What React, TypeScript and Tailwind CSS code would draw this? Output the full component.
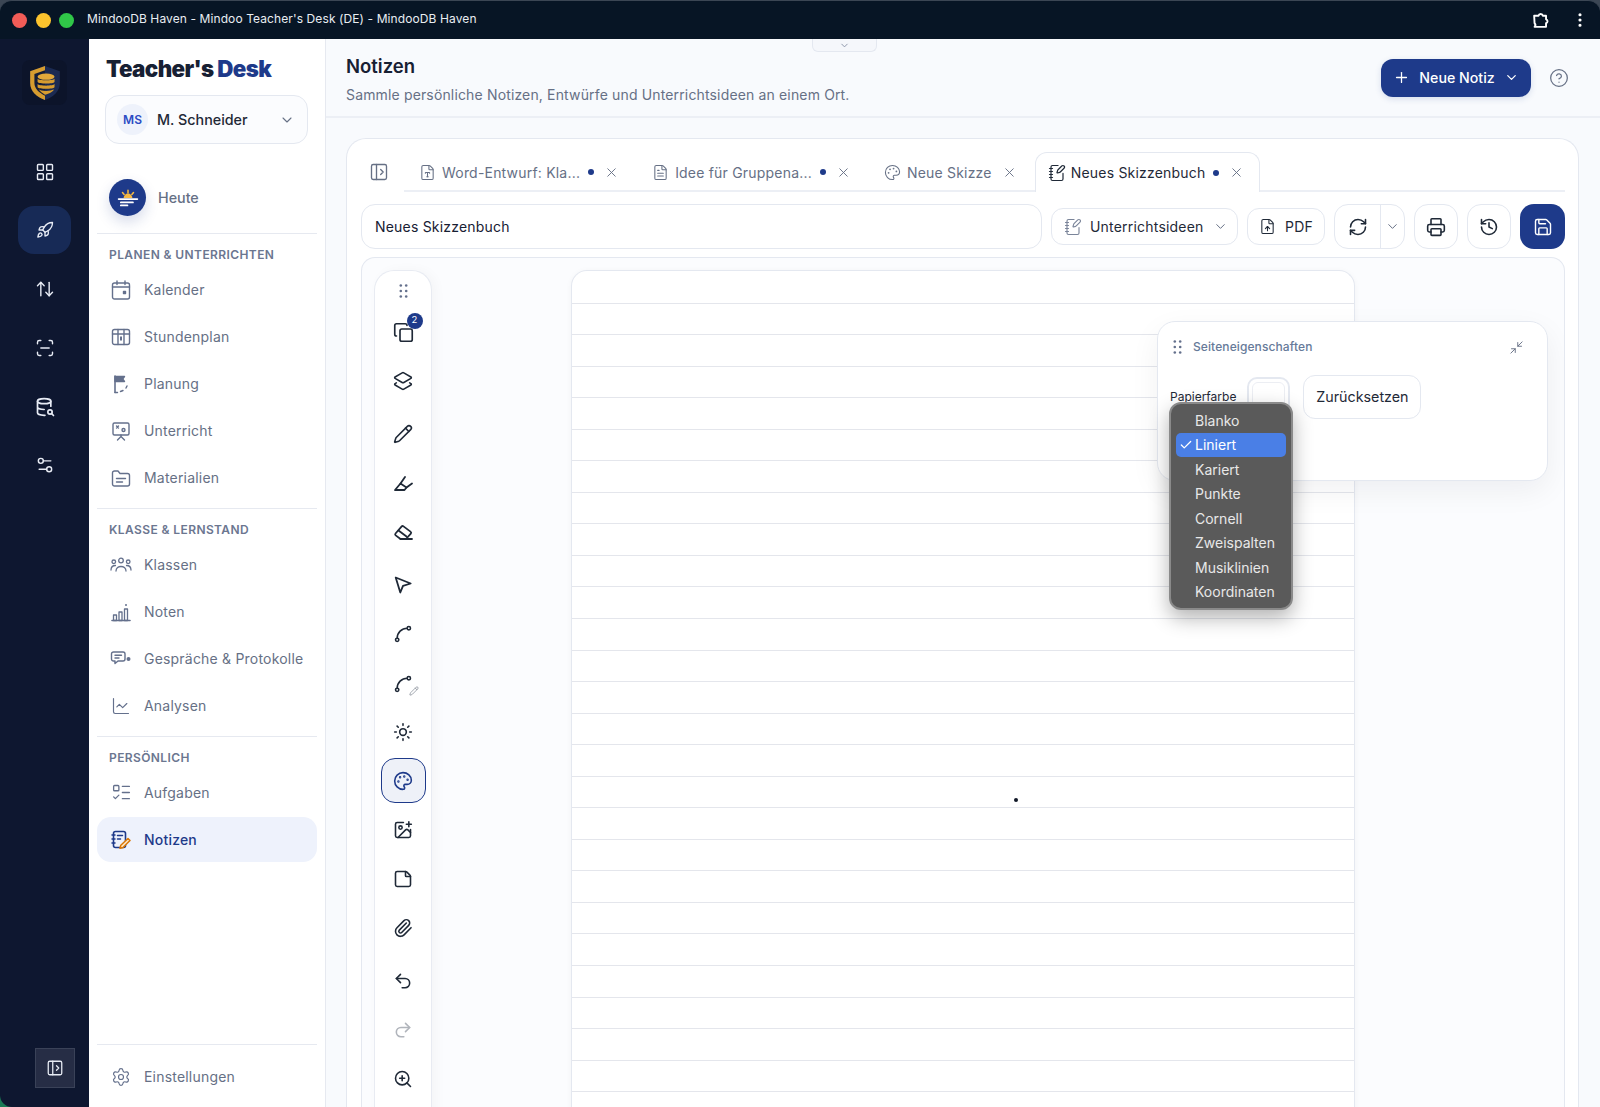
import React from 'react';
import {
  LayoutGrid, Rocket, ArrowUpDown, ScanLine, Settings2, PanelLeftOpen, ChevronDown, Settings, X, FileType, FileText, Palette, NotebookPen,
  FileUp, RefreshCw, Printer, History, Save, Plus, CircleHelp, Layers2, Pencil, Spline, Sun, ImagePlus, StickyNote, Paperclip, Undo2, Redo2, ZoomIn, Copy, Minimize2, EllipsisVertical, Check, ChartLine, ListTodo,
} from 'lucide-react';

const font = "font-['Inter','Liberation_Sans',sans-serif]";

function Grip({ className = '' }: { className?: string }) {
  return (
    <svg width="9" height="14" viewBox="0 0 9 14" className={className} fill="currentColor">
      {[1.5, 7, 12.5].map((y) => (
        <g key={y}>
          <circle cx="1.8" cy={y} r="1.3" />
          <circle cx="7.2" cy={y} r="1.3" />
        </g>
      ))}
    </svg>
  );
}

const S = { fill: 'none', stroke: 'currentColor', strokeWidth: 1.7, strokeLinecap: 'round', strokeLinejoin: 'round' } as const;

const CalendarIcon = () => (
  <svg width="20" height="20" viewBox="0 0 20 20" {...S} strokeWidth={1.4}>
    <rect x="1.5" y="3" width="17" height="16" rx="2" />
    <path d="M1.5 7h17M6 1v3.5M14 1v3.5" />
    <rect x="12.5" y="11.5" width="2" height="2" fill="currentColor" />
  </svg>
);
const TimetableIcon = () => (
  <svg width="20" height="20" viewBox="0 0 20 20" {...S} strokeWidth={1.4}>
    <rect x="1.5" y="2.5" width="17" height="15" rx="2" />
    <path d="M1.5 7h17M7 2.5v15M13 2.5v15" />
    <rect x="9" y="9.5" width="2" height="4" fill="currentColor" stroke="none" />
  </svg>
);
const PlanIcon = () => (
  <svg width="20" height="20" viewBox="0 0 20 20" {...S} strokeWidth={1.4}>
    <path d="M4 2v16.5" strokeWidth={1.6} />
    <path d="M4 2.5h9.5l-1.8 2.5 1.8 2.5h-9.5z" fill="currentColor" />
    <path d="M4 18.5h2.5M9.5 17.5l2.5-1M15 14l1-2" />
  </svg>
);
const TeachIcon = () => (
  <svg width="20" height="20" viewBox="0 0 20 20" {...S} strokeWidth={1.4}>
    <rect x="2" y="2" width="16" height="12" rx="1.5" />
    <path d="M5.5 5l2 2m0-2l-2 2" />
    <circle cx="12.5" cy="9" r="1.5" />
    <path d="M10 14v1.5M6.5 19l3.5-3.5 3.5 3.5" />
  </svg>
);
const FolderIcon = () => (
  <svg width="20" height="20" viewBox="0 0 20 20" {...S} strokeWidth={1.4}>
    <path d="M1.5 5a2 2 0 0 1 2-2h3.5l2 2.5h7.5a2 2 0 0 1 2 2V16a2 2 0 0 1-2 2h-13a2 2 0 0 1-2-2z" />
    <path d="M5.5 10.5h9M5.5 14h6" />
  </svg>
);
const GroupIcon = () => (
  <svg width="22" height="20" viewBox="0 0 22 20" {...S} strokeWidth={1.3}>
    <circle cx="11" cy="5.5" r="2.3" />
    <circle cx="3.8" cy="6.8" r="1.8" />
    <circle cx="18.2" cy="6.8" r="1.8" />
    <path d="M6 16c0-6 10-6 10 0M1 15c0-3 2-4.5 4.5-4.5M21 15c0-3-2-4.5-4.5-4.5" />
  </svg>
);
const BarsIcon = () => (
  <svg width="20" height="20" viewBox="0 0 20 20" {...S} strokeWidth={1.3}>
    <path d="M1 18.5h18" strokeWidth={1.6} />
    <rect x="2.5" y="13" width="3" height="5.5" />
    <rect x="8" y="10" width="3" height="8.5" />
    <rect x="13.5" y="7" width="3" height="11.5" />
    <circle cx="15" cy="3" r="1" fill="currentColor" stroke="none" />
  </svg>
);
const TalkIcon = () => (
  <svg width="22" height="20" viewBox="0 0 22 20" {...S} strokeWidth={1.4}>
    <path d="M3.5 3h9.5a2 2 0 0 1 2 2v5a2 2 0 0 1-2 2H8l-3 2.5V12H3.5a2 2 0 0 1-2-2V5a2 2 0 0 1 2-2z" />
    <path d="M5 6.3h6.5M5 9h4" />
    <circle cx="18.5" cy="10" r="2" fill="currentColor" stroke="none" />
  </svg>
);
const NotesIcon = () => (
  <svg width="20" height="20" viewBox="0 0 20 20" fill="none" strokeLinecap="round" strokeLinejoin="round">
    <rect x="2.5" y="1.5" width="12" height="16" rx="2" stroke="#1e3a8a" strokeWidth="1.6" />
    <path d="M1 5h3M1 9h3M1 13h3M6.5 5.5h5M6.5 9h3" stroke="#1e3a8a" strokeWidth="1.5" />
    <path d="M17 8.5l2 2-7 7-3 .8.8-3z" fill="#fde6c4" stroke="#d97706" strokeWidth="1.5" />
  </svg>
);
const DbSearch = () => (
  <svg width="20" height="20" viewBox="0 0 24 24" {...S} strokeWidth={2}>
    <ellipse cx="11" cy="5" rx="8" ry="3" />
    <path d="M3 5v14c0 1.6 3.5 3 8 3h1M3 12c0 1.6 3.5 3 8 3M19 5v6" />
    <circle cx="18" cy="18" r="2.6" />
    <path d="M20 20l2.2 2.2" />
  </svg>
);
const HighlightIcon = () => (
  <svg width="20" height="20" viewBox="0 0 20 20" {...S} strokeWidth={1.8}>
    <path d="M2 16h9.5L13.5 13.5 7.5 9.5z" />
    <path d="M7.5 9.5L12 3M13.5 13.5l5.5-4" />
  </svg>
);
const EraserIcon = () => (
  <svg width="20" height="20" viewBox="0 0 20 20" {...S} strokeWidth={1.8}>
    <path d="M2.5 10.5L8.5 3.6a1.5 1.5 0 0 1 2-.2l7 5.2a1.5 1.5 0 0 1 .3 2.1L13 16H7.5l-4.8-3.6a1.4 1.4 0 0 1-.2-1.9z" />
    <path d="M7.5 16H19M5.5 7.5l8 6" />
  </svg>
);
const PointerIcon = () => (
  <svg width="20" height="20" viewBox="0 0 20 20" {...S} strokeWidth={1.8}>
    <path d="M2.7 2.5l15 6-7.7 2.4-2.7 6.6z" />
  </svg>
);
const PuzzleIcon = () => (
  <svg width="19" height="19" viewBox="0 0 24 24" {...S} strokeWidth={2.4}>
    <path d="M4 6h5.5a2.8 2.8 0 0 1 5.500 0H19v4.500a2.600 2.600 0 0 1 0 5V20H4.500c1.500-1.500 1.500-3 0-4.500z" />
  </svg>
);
const SplinePen = () => (
  <span className="relative flex h-6 w-6 items-center justify-center">
    <Spline size={20} strokeWidth={1.9} />
    <Pencil size={10} strokeWidth={1.5} className="absolute -right-1 bottom-0 text-[#6f7683]" />
  </span>
);
const Logo = () => (
  <svg width="32" height="36" viewBox="0 0 30 34" fill="none">
    <path d="M15 1L29 6v11c0 8-6 13-14 16C7 30 1 25 1 17V6z" fill="#1b2a52" />
    <path d="M15 1L1 6v11c0 8 6 13 14 16z" fill="#d69c2f" />
    <path d="M15 5L5 8.500V17c0 5 4 9 10 12z" fill="#141d38" />
    <ellipse cx="16" cy="11" rx="8" ry="3" fill="#e1a83a" />
    <path d="M8 13c1 2 15 2 16 0v3c-1 2-15 2-16 0zM8 18c1 2 15 2 16 0v3c-1 2-15 2-16 0zM9 23c2 2 12 2 14 0v1c-3 3-8 4-8 4-2-1-5-3-6-5z" fill="#d69c2f" />
  </svg>
);
const TodayIcon = () => (
  <span className="flex h-[37px] w-[37px] items-center justify-center rounded-full bg-[#1e3a8a] shadow-[0_6px_14px_rgba(30,58,138,0.18)]">
    <svg width="22" height="22" viewBox="0 0 20 20" fill="none" strokeLinecap="round">
      <path d="M6 10a4 4 0 0 1 8 0z" fill="#f5b942" />
      <path d="M10 3v2.500M5 5l1.500 1.800M15 5l-1.500 1.800" stroke="#f5b942" strokeWidth="1.4" />
      <path d="M1.500 11h17M3.500 14h11M3.500 16.800h6" stroke="#fff" strokeWidth="1.6" />
    </svg>
  </span>
);

function NavRow({ icon, label, active, tall }: { icon: React.ReactNode; label: string; active?: boolean; tall?: boolean }) {
  return (
    <div className={`flex items-center gap-[12px] rounded-[14px] pl-[13px] ${tall ? 'h-[45px] my-px' : 'h-[47px]'} ${active ? 'bg-[#eef2fc] text-[#1e3a8a] font-medium' : 'text-[#667085]'}`}>
      <span className="flex w-[22px] shrink-0 items-center justify-center text-[#64708c]">{icon}</span>
      <span className="text-[14px] tracking-[0.2px]">{label}</span>
    </div>
  );
}

function SectionLabel({ children }: { children: React.ReactNode }) {
  return <div className="pl-[12px] pt-[12px] pb-[3px] text-[12px] font-semibold leading-[18px] tracking-[0.4px] text-[#6b7690]">{children}</div>;
}

function Tab({ icon, label, dirty, active }: { icon: React.ReactNode; label: string; dirty?: boolean; active?: boolean }) {
  return (
    <div className={`flex h-[40px] items-center ${active ? 'rounded-t-[12px] border border-b-0 border-[#e4e8f0] bg-white pl-[12px] pr-[15px] text-[#1f2937]' : 'pl-[15px] pr-[12px] text-[#667085]'}`}>
      <span className={active ? 'text-[#1f2937]' : 'text-[#667085]'}>{icon}</span>
      <span className={`${active ? 'ml-[5px]' : 'ml-[6px]'} text-[14px] tracking-[0.2px] whitespace-nowrap`}>{label}</span>
      {dirty && <span className="ml-[8px] h-[6px] w-[6px] rounded-full bg-[#1e3a8a]" />}
      <X size={15} strokeWidth={1.5} className="ml-[10px] text-[#667085]" />
    </div>
  );
}

function ToolBtn({ children, className = 'h-[49px]', active, color = 'text-[#1f2937]' }: { children: React.ReactNode; className?: string; active?: boolean; color?: string }) {
  return (
    <div className={`flex w-full shrink-0 items-center justify-center ${className} ${color}`}>
      {active ? (
        <span className="flex h-[45px] w-[45px] items-center justify-center rounded-[14px] border border-[#1e3a8a] bg-[#eef1f8] text-[#1e3a8a]">{children}</span>
      ) : (
        children
      )}
    </div>
  );
}

const papers = ['Blanko', 'Liniert', 'Kariert', 'Punkte', 'Cornell', 'Zweispalten', 'Musiklinien', 'Koordinaten'];

export default function App() {
  const ic = { size: 20, strokeWidth: 1.7 };
  const tc = { size: 20, strokeWidth: 1.9 };
  return (
    <div className={`${font} relative flex h-[1107px] w-[1600px] flex-col overflow-hidden bg-[#3b4654]`}>
      {/* title bar */}
      <div className="flex h-[39px] shrink-0 items-center rounded-t-[12px] border-t border-[#3b4654] bg-[#071525] pl-[12px] pr-[11px] text-white">
        <span className="h-[15px] w-[15px] rounded-full bg-[#f25c57]" />
        <span className="ml-[8.5px] h-[15px] w-[15px] rounded-full bg-[#fdc42d]" />
        <span className="ml-[8.5px] h-[15px] w-[15px] rounded-full bg-[#30c748]" />
        <span className="-mt-[2px] ml-[13px] text-[12px] tracking-[0.1px] text-[#e9edf2]">MindooDB Haven - Mindoo Teacher's Desk (DE) - MindooDB Haven</span>
        <span className="ml-auto flex items-center gap-[21px]">
          <PuzzleIcon />
          <EllipsisVertical size={18} strokeWidth={2.2} />
        </span>
      </div>

      <div className="flex min-h-0 flex-1 bg-[#1a7a55]">
        {/* rail */}
        <div className="flex w-[89px] shrink-0 flex-col items-center rounded-bl-[12px] bg-[#0e1730] pt-[21px] text-[#e8ecf5]">
          <div className="flex h-[45px] w-[45px] items-center justify-center rounded-[8px] bg-[#0c142a]"><Logo /></div>
          <div className="mt-[38px] flex h-[58px] w-full items-center justify-center"><LayoutGrid {...ic} /></div>
          <div className="flex h-[58px] w-full items-center justify-center">
            <span className="flex h-[48px] w-[53px] items-center justify-center rounded-[16px] bg-[#172a56]"><Rocket size={18} strokeWidth={1.8} /></span>
          </div>
          <div className="flex h-[60px] w-full items-center justify-center"><ArrowUpDown {...ic} /></div>
          <div className="flex h-[58px] w-full items-center justify-center"><ScanLine {...ic} /></div>
          <div className="flex h-[59px] w-full items-center justify-center"><DbSearch /></div>
          <div className="flex h-[58px] w-full items-center justify-center"><Settings2 {...ic} /></div>
          <div className="mt-auto mb-[19px] flex h-[40px] w-[40px] items-center justify-center self-end mr-[14px] border border-[#3a4258] bg-[#262d45]"><PanelLeftOpen size={18} strokeWidth={1.7} /></div>
        </div>

        {/* sidebar */}
        <div className="flex w-[237px] shrink-0 flex-col border-r border-[#e6e9f0] bg-white px-[8px]">
          <div className="pl-[9px] pt-[15px] text-[22.3px] font-black leading-[30px] tracking-[-0.6px] text-[#172033]">
            Teacher's <span className="text-[#1e3a8a]">Desk</span>
          </div>
          <div className="ml-[8px] mt-[11px] flex h-[49px] w-[203px] items-center rounded-[14px] border border-[#e4e8f0] bg-[#fbfcfe] pl-[11px] pr-[12px]">
            <span className="flex h-[31px] w-[31px] items-center justify-center rounded-full bg-[#eef2fb] text-[12px] font-semibold text-[#2b4bc4]">MS</span>
            <span className="ml-[9px] text-[14.3px] font-medium text-[#1f2937]">M. Schneider</span>
            <ChevronDown size={16} strokeWidth={1.6} className="ml-auto text-[#667085]" />
          </div>
          <div className="mt-[35px] flex h-[37px] items-center pl-[12px]">
            <TodayIcon />
            <span className="ml-[12px] text-[14.3px] font-medium text-[#667085]">Heute</span>
          </div>
          <div className="mt-[17px] h-px bg-[#e6e9f0]" />
          <SectionLabel>PLANEN &amp; UNTERRICHTEN</SectionLabel>
          <div className="-mt-[1px]">
            <NavRow icon={<CalendarIcon />} label="Kalender" />
            <NavRow icon={<TimetableIcon />} label="Stundenplan" />
            <NavRow icon={<PlanIcon />} label="Planung" />
            <NavRow icon={<TeachIcon />} label="Unterricht" />
            <NavRow icon={<FolderIcon />} label="Materialien" />
          </div>
          <div className="mt-[7px] h-px bg-[#e6e9f0]" />
          <SectionLabel>KLASSE &amp; LERNSTAND</SectionLabel>
          <div className="-mt-[1px]">
            <NavRow icon={<GroupIcon />} label="Klassen" />
            <NavRow icon={<BarsIcon />} label="Noten" />
            <NavRow icon={<TalkIcon />} label="Gespräche & Protokolle" />
            <NavRow icon={<ChartLine size={20} strokeWidth={1.4} />} label="Analysen" />
          </div>
          <div className="mt-[7px] h-px bg-[#e6e9f0]" />
          <SectionLabel>PERSÖNLICH</SectionLabel>
          <div className="-mt-[1px]">
            <NavRow icon={<ListTodo size={21} strokeWidth={1.5} />} label="Aufgaben" />
            <NavRow icon={<NotesIcon />} label="Notizen" active tall />
          </div>
          <div className="mt-auto h-px bg-[#e6e9f0]" />
          <div className="mb-[7px] mt-[8px]"><NavRow icon={<Settings size={20} strokeWidth={1.4} />} label="Einstellungen" /></div>
        </div>

        {/* main */}
        <div className="relative flex min-w-0 flex-1 flex-col bg-[#f8fafd]">
          <div className="absolute left-[486px] top-0 flex h-[13px] w-[65px] items-center justify-center rounded-b-[6px] border border-t-0 border-[#e4e8f0] bg-[#f5f7fb]">
            <ChevronDown size={11} className="text-[#8791a5]" />
          </div>
          <div className="flex h-[79px] shrink-0 items-center justify-between border-b-2 border-[#eceff5] pl-[20px] pr-[31px]">
            <div className="pt-[3px]">
              <div className="text-[18.5px] font-semibold leading-[26px] text-[#172033]">Notizen</div>
              <div className="mt-[5px] text-[14px] leading-[22px] tracking-[0.15px] text-[#667085]">Sammle persönliche Notizen, Entwürfe und Unterrichtsideen an einem Ort.</div>
            </div>
            <div className="flex items-center gap-[18px]">
              <div className="flex h-[38px] w-[150px] items-center justify-center gap-[9px] rounded-[12px] bg-[#1e3a8a] text-[14.2px] font-medium text-white shadow-[0_2px_6px_rgba(30,58,138,0.15)]">
                <Plus size={17} strokeWidth={1.8} />
                Neue Notiz
                <ChevronDown size={15} strokeWidth={2} />
              </div>
              <CircleHelp size={20} strokeWidth={1.5} className="text-[#667085]" />
            </div>
          </div>

          {/* card */}
          <div className="ml-[20px] mr-[21px] mt-[20px] flex min-h-0 flex-1 flex-col rounded-t-[20px] border border-b-0 border-[#e4e8f0] bg-white pl-[14px] pr-[13px] pt-[13px]">
            <div className="flex h-[40px] shrink-0 items-end">
              <div className="flex h-[40px] w-[43px] items-center pl-[8px] text-[#667085]"><PanelLeftOpen size={20} strokeWidth={1.6} /></div>
              <div className="flex h-[40px] flex-1 items-end border-b-2 border-[#eceff5]">
                <div className="mb-[-2px] flex items-end">
                  <Tab icon={<FileType size={17} strokeWidth={1.5} />} label="Word-Entwurf: Kla..." dirty />
                  <div className="w-[6px]" />
                  <Tab icon={<FileText size={17} strokeWidth={1.5} />} label="Idee für Gruppena..." dirty />
                  <div className="w-[6px]" />
                  <Tab icon={<Palette size={17} strokeWidth={1.5} />} label="Neue Skizze" />
                  <div className="w-[6px]" />
                  <Tab icon={<NotebookPen size={18} strokeWidth={1.6} />} label="Neues Skizzenbuch" dirty active />
                </div>
              </div>
            </div>

            <div className="mt-[12px] flex h-[45px] shrink-0 items-center gap-[9px]">
              <div className="flex h-[45px] flex-1 items-center rounded-[14px] border border-[#e4e8f0] pl-[13px] text-[14px] tracking-[0.2px] text-[#172033]">Neues Skizzenbuch</div>
              <div className="flex h-[37px] w-[187px] items-center rounded-[12px] border border-[#e4e8f0] pl-[12px] text-[14px] tracking-[0.2px] text-[#1f2937]">
                <NotebookPen size={18} strokeWidth={1.5} className="text-[#7a8499]" />
                <span className="ml-[8px]">Unterrichtsideen</span>
                <ChevronDown size={15} strokeWidth={1.6} className="ml-[9px] text-[#667085]" />
              </div>
              <div className="flex h-[37px] w-[78px] items-center justify-center gap-[9px] rounded-[12px] border border-[#e4e8f0] text-[14px] tracking-[0.2px] text-[#1f2937]">
                <FileUp size={17} strokeWidth={1.5} />
                PDF
              </div>
              <div className="flex h-[45px] w-[71px] overflow-hidden rounded-[14px] border border-[#e4e8f0]">
                <div className="flex w-[46px] items-center justify-center border-r border-[#e4e8f0]"><RefreshCw {...tc} className="text-[#1f2937]" /></div>
                <div className="flex flex-1 items-center justify-center"><ChevronDown size={15} strokeWidth={1.6} className="text-[#667085]" /></div>
              </div>
              <div className="flex h-[45px] w-[44px] items-center justify-center rounded-[14px] border border-[#e4e8f0] text-[#1f2937]"><Printer {...tc} /></div>
              <div className="flex h-[45px] w-[44px] items-center justify-center rounded-[14px] border border-[#e4e8f0] text-[#1f2937]"><History {...tc} /></div>
              <div className="flex h-[45px] w-[45px] items-center justify-center rounded-[14px] bg-[#1e3a8a] text-white"><Save {...ic} /></div>
            </div>

            {/* canvas */}
            <div className="relative mt-[8px] flex min-h-0 flex-1 overflow-hidden rounded-t-[14px] border border-b-0 border-[#e4e8f0] bg-[#fbfcfe] pl-[12px] pt-[12px]">
              <div className="flex h-[900px] w-[58px] shrink-0 flex-col items-center rounded-t-[20px] border border-b-0 border-[#e8ebf2] bg-white shadow-[4px_0_12px_rgba(15,23,42,0.03)]">
                <ToolBtn className="h-[40px]" color="text-[#64708c]"><Grip /></ToolBtn>
                <ToolBtn className="h-[42px]">
                  <span className="relative flex">
                    <Copy size={21} strokeWidth={1.9} />
                    <span className="absolute -right-[9px] -top-[9px] flex h-[16px] w-[16px] items-center justify-center rounded-full bg-[#1e3a8a] text-[9.5px] text-white">2</span>
                  </span>
                </ToolBtn>
                <ToolBtn className="mt-[3px] h-[49px]"><Layers2 {...tc} /></ToolBtn>
                <ToolBtn className="mt-[4px] h-[49px]"><Pencil {...tc} /></ToolBtn>
                <ToolBtn className="mt-[1px] h-[49px]"><HighlightIcon /></ToolBtn>
                <ToolBtn><EraserIcon /></ToolBtn>
                <ToolBtn className="mt-[3px] h-[49px]"><PointerIcon /></ToolBtn>
                <ToolBtn><Spline {...tc} /></ToolBtn>
                <ToolBtn className="mt-[1px] h-[49px]"><SplinePen /></ToolBtn>
                <ToolBtn className="-mt-[1px] h-[49px]"><Sun {...tc} /></ToolBtn>
                <ToolBtn active><Palette {...tc} /></ToolBtn>
                <ToolBtn><ImagePlus {...tc} /></ToolBtn>
                <ToolBtn><StickyNote {...tc} /></ToolBtn>
                <ToolBtn><Paperclip {...tc} /></ToolBtn>
                <ToolBtn className="mt-[4px] h-[49px]"><Undo2 {...tc} /></ToolBtn>
                <ToolBtn color="text-[#b0b4bb]"><Redo2 {...tc} /></ToolBtn>
                <ToolBtn><ZoomIn {...tc} /></ToolBtn>
              </div>

              <div className="relative ml-[139px] h-[900px] w-[784px] shrink-0 rounded-t-[16px] border border-b-0 border-[#e4e8f0] bg-white pt-[1px] shadow-[0_1px_6px_rgba(15,23,42,0.04)]">
                {Array.from({ length: 27 }).map((_, i) => (
                  <div key={i} className="h-[31.55px] border-b border-[#e4e6ec]" />
                ))}
                <span className="absolute left-[442px] top-[527px] h-[4px] w-[4px] rounded-full bg-[#111827]" />
              </div>

              {/* floating properties panel */}
              <div className="absolute left-[795px] top-[63px] h-[160px] w-[391px] rounded-[18px] border border-[#e4e8f0] bg-white shadow-[0_10px_30px_rgba(15,23,42,0.06)]">
                <div className="flex items-center pl-[15px] pr-[23px] pt-[16px]">
                  <Grip className="text-[#64708c]" />
                  <span className="ml-[11px] text-[12px] font-medium tracking-[0.1px] text-[#667a99]">Seiteneigenschaften</span>
                  <Minimize2 size={15} strokeWidth={1.5} className="ml-auto text-[#667085]" />
                </div>
                <div className="mt-[19px] flex items-center pl-[12px]">
                  <span className="text-[12px] text-[#1f2937]">Papierfarbe</span>
                  <span className="ml-[11px] h-[40px] w-[43px] rounded-[10px] border-2 border-[#e4e8f0] bg-white p-[3px]"><span className="block h-full w-full rounded-[6px] border border-[#eceef3]" /></span>
                  <span className="ml-[13px] flex h-[44px] w-[118px] items-center justify-center rounded-[12px] border border-[#e4e8f0] text-[14.3px] text-[#1f2937]">Zurücksetzen</span>
                </div>
              </div>

              {/* native select popup */}
              <div className="absolute left-[807px] top-[144px] flex w-[124px] flex-col rounded-[12px] border-2 border-[#8a8a8a] bg-[#5a5a5a] px-[5px] py-[4px] shadow-[0_8px_20px_rgba(0,0,0,0.3)]">
                {papers.map((p, i) => (
                  <div key={p} className={`relative flex h-[24.5px] items-center rounded-[5px] pl-[19px] text-[14px] ${i === 1 ? 'bg-[#4a7fe6] text-white' : 'text-[#e8e8e8]'}`}>
                    {i === 1 && <Check size={14} strokeWidth={2.2} className="absolute left-[3px]" />}
                    {p}
                  </div>
                ))}
              </div>
            </div>
          </div>
        </div>
      </div>
    </div>
  );
}
